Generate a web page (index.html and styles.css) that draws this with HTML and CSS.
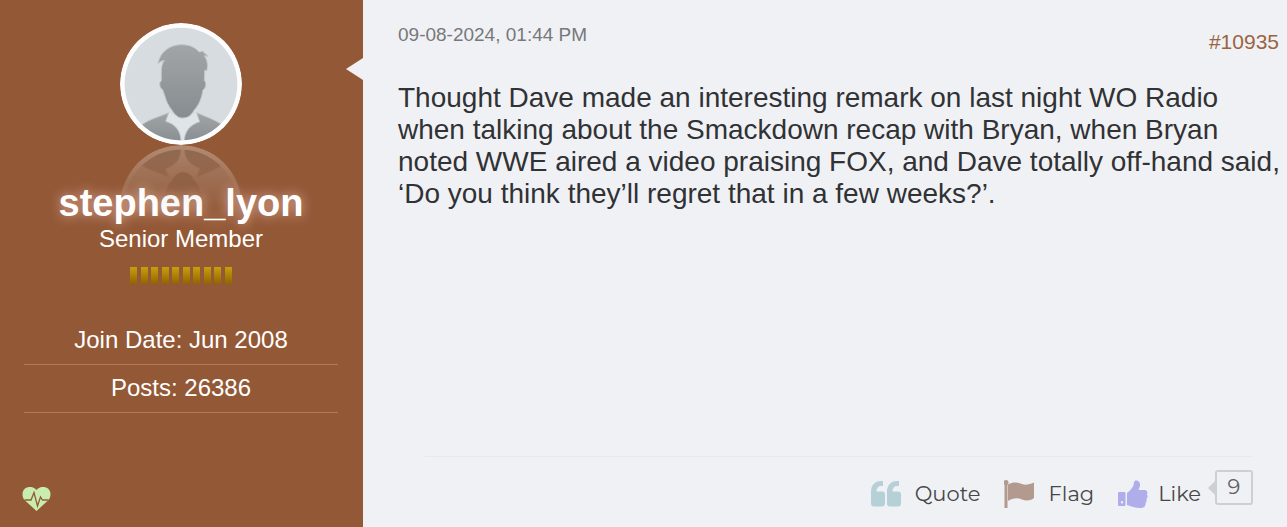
FILE: index.html
```html
<!DOCTYPE html>
<html lang="en">
<head>
<meta charset="utf-8">
<title>Post #10935</title>
<link rel="stylesheet" href="styles.css">
</head>
<body>
<article class="post">
  <aside class="user">
    <svg class="avatar" viewBox="60 38 366 366" role="img" aria-label="Avatar">
      <defs>
        <linearGradient id="skin" x1="0" y1="0" x2="0" y2="1"><stop offset="0" stop-color="#a2a5a7"/><stop offset="1" stop-color="#868d90"/></linearGradient>
        <clipPath id="disc"><circle cx="243" cy="221" r="169"/></clipPath>
      </defs>
      <circle cx="243" cy="221" r="183" fill="#fdfdfd"/>
      <circle cx="243" cy="221" r="169" fill="#d7dce0"/>
      <g clip-path="url(#disc)">
        <path d="M206 306 L247 326 L290 306 L300 340 L255 392 H240 L195 340Z" fill="#dfe4e8"/>
        <g fill="url(#skin)" stroke="#c0c5c8" stroke-width="3">
          <path d="M174 160C181 121 213 103 245 103C270 103 288 113 297 125L308 123L324 138L313 136C323 151 324 167 320 181L314 180L313 212C320 213 318 236 309 238C304 268 296 284 282 300C272 319 260 323 248 323C236 323 226 316 217 301C204 286 198 270 194 255L188 238C179 235 176 214 184 212L184 190C183 172 187 158 193 150C186 151 180 154 174 160Z"/>
          <path d="M120 348C145 326 178 320 206 307L197 333C228 343 244 362 243 400H110Z"/>
          <path d="M290 307C318 320 345 327 370 346V400H252C253 362 268 345 299 334Z"/>
        </g>
      </g>
    </svg>
    <h2 class="name">stephen_lyon</h2>
    <p class="rank">Senior Member</p>
    <div class="pips" role="img" aria-label="Reputation"><i></i><i></i><i></i><i></i><i></i><i></i><i></i><i></i><i></i><i></i></div>
    <ul class="facts">
      <li>Join Date: Jun 2008</li>
      <li>Posts: 26386</li>
    </ul>
    <svg class="status" viewBox="0 0 28 24" aria-hidden="true">
      <path d="M14 24L2 13C-1 9-.5 4 2.500 1.500C6-1 11-.5 14 3C17-.5 22-1 25.500 1.500C28.500 4 29 9 26 13Z" fill="#c9edae"/>
      <path d="M2 13H8.500L11.500 5.500L15 19L18 10L20 13H26" fill="none" stroke="#935937" stroke-width="1.300"/>
    </svg>
  </aside>
  <section class="content">
    <header class="meta">
      <time datetime="2024-09-08T13:44">09-08-2024, 01:44 PM</time>
      <a class="number" href="#post10935" id="post10935">#10935</a>
    </header>
    <p class="message">Thought Dave made an interesting remark on last night WO Radio when talking about the Smackdown recap with Bryan, when Bryan noted WWE aired a video praising FOX, and Dave totally off-hand said, ‘Do you think they’ll regret that in a few weeks?’.</p>
    <footer class="actions">
      <button class="action" type="button">
        <svg class="icon quote" viewBox="0 0 30 26" aria-hidden="true"><path id="q" d="M12 0V5H10C7 5 5.500 7 5.500 10.500H11Q14 10.500 14 13.500V22.500Q14 25.500 11 25.500H3Q0 25.500 0 22.500V11C0 4 4 0 10 0Z"/><use href="#q" x="16"/></svg>
        Quote
      </button>
      <button class="action" type="button">
        <svg class="icon flag" viewBox="0 0 30 28" aria-hidden="true"><circle cx="2" cy="2.500" r="2.500"/><path d="M.5 3H3.500V28H.5ZM4 4.500C9 2 13 2 18 4C22 5.500 25 4.500 30 2.500V18C26 21 22 21 18 19.500C13 17.500 9 18 4 21Z"/></svg>
        Flag
      </button>
      <button class="action like" type="button">
        <svg class="icon thumb" viewBox="0 0 30 28" aria-hidden="true"><path fill-rule="evenodd" d="M1 12H6.500Q7.500 12 7.500 13V25Q7.500 26 6.500 26H1Q0 26 0 25V13Q0 12 1 12ZM4 21A1.200 1.200 0 1 0 4 23.400A1.200 1.200 0 1 0 4 21Z"/><path d="M9 13C12 11 14 8 15.500 5.500C16 3 16 .5 18 .5C21 .5 22.500 3 22 6L20.500 10H26C29 10 30 12 29 14.500C30 16 29.500 18 28.500 19C29 21 28.500 22 27.500 23C28 26 26 28 22 28C17 28 13 26 9 25Z"/></svg>
        Like
      </button>
      <a class="count" href="#likes" id="likes">9</a>
    </footer>
  </section>
</article>
</body>
</html>
```
FILE: styles.css
```css
* { box-sizing: border-box; }
body {
  margin: 0;
  background: #f0f1f5;
  color: #303234;
  font-family: "Liberation Sans", Arial, sans-serif;
}
.post { display: flex; min-height: 100vh; }
.user {
  flex: 0 0 363px;
  display: flex;
  flex-direction: column;
  align-items: center;
  padding: 23px 25px 16px 24px;
  background: #935937;
  color: #fff;
  font-size: 24px;
  line-height: 28px;
}
.avatar {
  width: 122px;
  height: 122px;
  border-radius: 50%;
  -webkit-box-reflect: below 0 linear-gradient(transparent 40%, rgba(255, 255, 255, .3));
}
.name {
  margin: 36px 0 0;
  font-size: 38px;
  line-height: 44px;
  text-shadow: 0 0 12px rgba(255, 205, 195, .7);
}
.rank { margin: 0; }
.pips { display: flex; justify-content: space-between; width: 102px; margin-top: 14px; }
.pips i {
  width: 7px;
  height: 17px;
  background: linear-gradient(#c6a00c, #906400);
}
.facts { align-self: stretch; margin: 33px 0 0; padding: 0; list-style: none; text-align: center; }
.facts li { padding: 9px 0 10px; border-bottom: 1px solid #b27b60; }
.status { width: 29px; height: 24px; margin: auto 0 0 -2px; align-self: flex-start; }
.content {
  position: relative;
  flex: 1;
  display: flex;
  flex-direction: column;
  min-width: 0;
  padding: 24px 0 18px 35px;
}
.content::before {
  content: "";
  position: absolute;
  left: -17px;
  top: 58px;
  border: solid transparent;
  border-width: 11px 17px 11px 0;
  border-right-color: #f0f1f5;
}
.meta {
  display: flex;
  justify-content: space-between;
  padding-right: 8px;
  font-size: 19px;
  line-height: 22px;
  color: #77787a;
}
.number { margin-top: 7px; font-size: 21px; color: #9a6441; text-decoration: none; }
.message { margin: 29px 0 40px; font-size: 28px; line-height: 32px; }
.actions {
  display: flex;
  justify-content: flex-end;
  align-items: flex-start;
  margin: auto 34px 0 27px;
  padding-top: 13px;
  border-top: 1px solid #e8e9ec;
  font-family: Montserrat, Inter, sans-serif;
}
.action {
  display: flex;
  align-items: center;
  gap: 14px;
  margin: 9px 24px 0 0;
  padding: 0;
  border: 0;
  background: none;
  color: #464749;
  font: inherit;
  font-size: 21px;
  line-height: 30px;
  cursor: pointer;
}
.like { gap: 10px; margin-right: 14px; }
.icon { width: 30px; height: 28px; }
.quote { fill: #b5d0d6; }
.flag { fill: #b39a8e; }
.thumb { fill: #b0aeea; }
.count {
  position: relative;
  width: 38px;
  height: 35px;
  border: 2px solid #cecfd1;
  border-radius: 3px;
  color: #606163;
  font-size: 21px;
  line-height: 30px;
  text-align: center;
  text-decoration: none;
}
.count::before {
  content: "";
  position: absolute;
  left: -9px;
  top: 8px;
  border: solid transparent;
  border-width: 8px 8px 8px 0;
  border-right-color: #cecfd1;
}
```
